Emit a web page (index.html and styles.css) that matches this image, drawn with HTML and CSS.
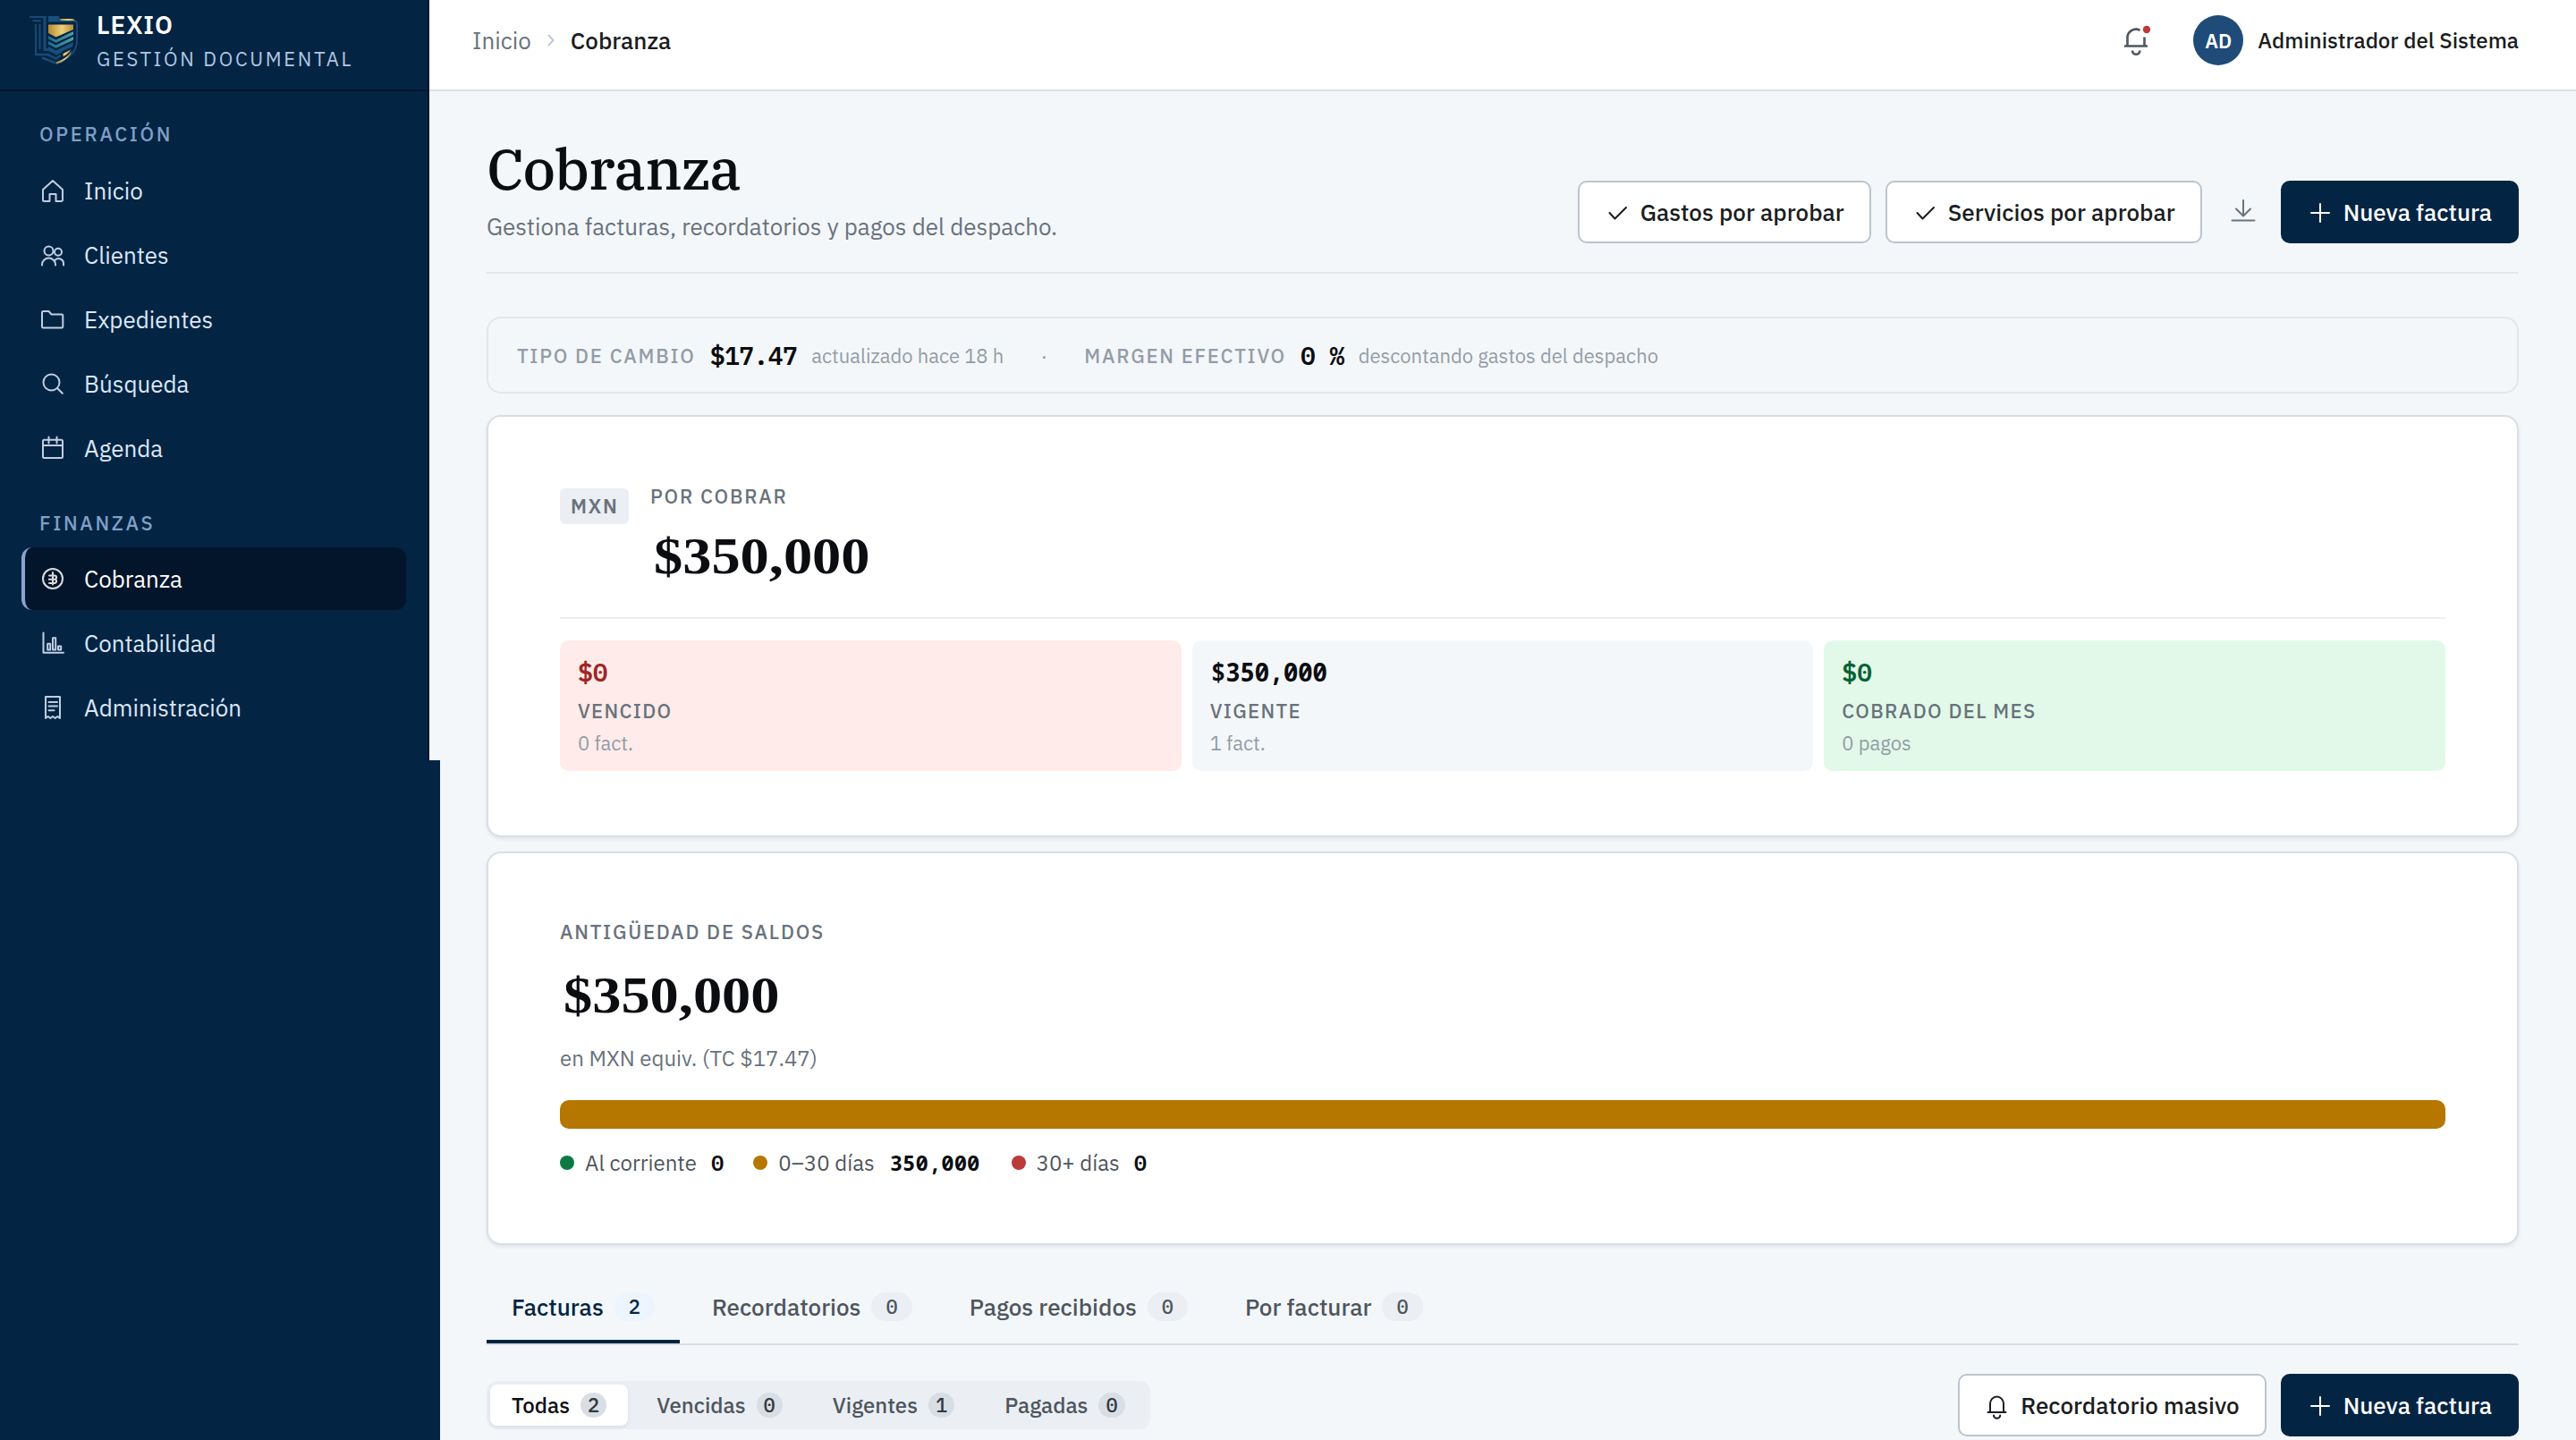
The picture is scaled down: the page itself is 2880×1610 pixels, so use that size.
FILE: index.html
```html
<!DOCTYPE html>
<html lang="es">
<head>
<meta charset="utf-8">
<title>Cobranza · LEXIO</title>
<link rel="stylesheet" href="styles.css">
</head>
<body>
<div class="app">
  <aside class="sidebar">
    <div class="sidebar-panel">
      <div class="brand">
        <svg class="brand-logo" viewBox="0 0 54 54" fill="none">
          <defs>
            <linearGradient id="gold" x1="0" x2="1" y1="0" y2="0">
              <stop offset="0" stop-color="#b58a34"/><stop offset=".55" stop-color="#ecd078"/><stop offset="1" stop-color="#b98d38"/>
            </linearGradient>
            <linearGradient id="teal" x1="0" x2="1" y1="0" y2="0">
              <stop offset="0" stop-color="#1f6a8c"/><stop offset="1" stop-color="#4aa0a8"/>
            </linearGradient>
          </defs>
          <g stroke="#174a75" stroke-width="2">
            <path d="M0 1h18.5M3.500 5.300H13M7 9v34.500M11.500 9v28"/>
            <path d="M17 0v37.500l5 0 8.500 4.200 5.500-2.400" stroke-width="3.200"/>
            <path d="M6 43h14.500l9 4.500 5.500-3.500M14 46.500l16 6.300 4-1.800" stroke-width="2.600"/>
          </g>
          <path d="M21 0h10.500l3 5.500H50q3 0 3 3V28q0 10-8.500 17-5 4-11 7.500" stroke="#174f7c" stroke-width="1.800"/>
          <path d="M21 0h10.500l3.500 6.500H21z" fill="#17517d"/>
          <path d="M34 3h14.500l2.500 2H35z" fill="url(#gold)"/>
          <path d="M21 9.500h28v5.500L29.500 23.500 21 19z" fill="url(#gold)"/>
          <path d="M21 22l8.500 4.500L49 17v3.800l-19.500 9L21 25.500z" fill="url(#teal)"/>
          <path d="M21 28l8.500 4.500L49 23v3.800l-19.500 9L21 31.500z" fill="url(#teal)"/>
          <path d="M21 34l8.500 4.500L49 29q0 3-1 5l-18.500 8.500L21 38z" fill="#17517d"/>
          <path d="M37.500 42l8.500-4.500q-2 4.500-8.500 7.500zM30 51.500q12-4 17.500-13-2.500 10-17.500 15z" fill="url(#gold)"/>
        </svg>
        <div class="brand-text">
          <span class="brand-name">LEXIO</span>
          <span class="brand-sub">GESTIÓN DOCUMENTAL</span>
        </div>
      </div>
      <nav class="nav">
        <div class="nav-label">OPERACIÓN</div>
        <a class="nav-item"><svg class="icon" viewBox="0 0 28 28"><path d="M14 3 3 13v11.500a1.500 1.500 0 0 0 1.500 1.500h6v-8h7v8h6a1.500 1.500 0 0 0 1.500-1.500V13z"/></svg>Inicio</a>
        <a class="nav-item"><svg class="icon" viewBox="0 0 28 28"><circle cx="9.500" cy="9.500" r="5"/><circle cx="20" cy="10.800" r="4"/><path d="M2 25.500v-.500a7.500 7.500 0 0 1 15 0v.500M16 20.500a5.500 5.500 0 0 1 10 3.500v1.500"/></svg>Clientes</a>
        <a class="nav-item"><svg class="icon" viewBox="0 0 28 28"><path d="M3.500 5H9.500l3 3.500H24a1.300 1.300 0 0 1 1.300 1.300v12.400A1.300 1.300 0 0 1 24 23.500H3.300A1.300 1.300 0 0 1 2 22.200V6.500A1.500 1.500 0 0 1 3.500 5z"/></svg>Expedientes</a>
        <a class="nav-item"><svg class="icon" viewBox="0 0 28 28"><circle cx="12.500" cy="12.500" r="9"/><path d="m19 19 5.800 5.800"/></svg>Búsqueda</a>
        <a class="nav-item"><svg class="icon" viewBox="0 0 28 28"><rect x="3" y="4.800" width="22" height="20.200" rx="1.500"/><path d="M3 11h22M9.500 1.500v7M18.500 1.500v7"/></svg>Agenda</a>
        <div class="nav-label nav-label-next">FINANZAS</div>
        <a class="nav-item active"><svg class="icon" viewBox="0 0 28 28"><circle cx="14" cy="14" r="11"/><path d="M14 7v13.500M10 10.500h6a2 2 0 0 1 0 4.200h-6.200M16 14.700a2 2 0 0 1 0 4.200h-6"/></svg>Cobranza</a>
        <a class="nav-item"><svg class="icon" viewBox="0 0 28 28"><path d="M3.500 2.500v22.300H26M8.200 14.800h3v6.800h-3zM14 8.200h3.200v13.400H14zM20 17.500h3.200v4.100H20z"/></svg>Contabilidad</a>
        <a class="nav-item"><svg class="icon" viewBox="0 0 28 28"><path d="M6 26V2h16v24l-2.700-2-2.600 2-2.700-2-2.700 2-2.600-2zM9.500 8h9.500M9.500 12.600h9.500M9.500 17.200h6"/></svg>Administración</a>
      </nav>
    </div>
    <div class="sidebar-rest"></div>
  </aside>

  <div class="main">
    <header class="topbar">
      <div class="crumbs">
        <span class="crumb">Inicio</span>
        <svg class="crumb-sep" viewBox="0 0 20 20"><path d="m7 4 5.500 6-5.500 6"/></svg>
        <span class="crumb-current">Cobranza</span>
      </div>
      <div class="account">
        <svg class="bell" viewBox="0 0 56 56"><path d="M15 34.500h26M18.500 34V25.500a9.500 9.500 0 0 1 14-8.700M37.500 34v-9.500M24 39.500a4.200 4.200 0 0 0 8.400 0"/><circle cx="40" cy="16" r="4.200"/></svg>
        <span class="avatar">AD</span>
        <span class="account-name">Administrador del Sistema</span>
      </div>
    </header>

    <main class="content">
      <section class="page-head">
        <div>
          <h1 class="title">Cobranza</h1>
          <p class="subtitle">Gestiona facturas, recordatorios y pagos del despacho.</p>
        </div>
        <div class="actions">
          <button class="btn"><svg class="icon" viewBox="0 0 28 28"><path d="m5.500 15 6 6.500L24 9"/></svg>Gastos por aprobar</button>
          <button class="btn"><svg class="icon" viewBox="0 0 28 28"><path d="m5.500 15 6 6.500L24 9"/></svg>Servicios por aprobar</button>
          <button class="btn-icon"><svg class="icon" viewBox="0 0 28 28"><path d="M16 1v17.500M8 10.500l8 8 8-8M3.500 23.500h25"/></svg></button>
          <button class="btn btn-primary"><svg class="icon" viewBox="0 0 28 28"><path d="M14 5v20M4 15h20"/></svg>Nueva factura</button>
        </div>
      </section>

      <section class="rates">
        <span class="rate-label">TIPO DE CAMBIO</span>
        <span class="rate-value">$17.47</span>
        <span class="rate-note">actualizado hace 18 h</span>
        <span class="rate-sep">·</span>
        <span class="rate-label">MARGEN EFECTIVO</span>
        <span class="rate-value">0 %</span>
        <span class="rate-note">descontando gastos del despacho</span>
      </section>

      <section class="card receivable">
        <div class="receivable-head">
          <span class="currency">MXN</span>
          <div>
            <div class="eyebrow eyebrow-tight">POR COBRAR</div>
            <div class="amount">$350,000</div>
          </div>
        </div>
        <div class="tiles">
          <div class="tile tile-overdue"><div class="tile-value">$0</div><div class="tile-label">VENCIDO</div><div class="tile-note">0 fact.</div></div>
          <div class="tile"><div class="tile-value long">$350,000</div><div class="tile-label">VIGENTE</div><div class="tile-note">1 fact.</div></div>
          <div class="tile tile-paid"><div class="tile-value">$0</div><div class="tile-label">COBRADO DEL MES</div><div class="tile-note">0 pagos</div></div>
        </div>
      </section>

      <section class="card aging">
        <div class="eyebrow">ANTIGÜEDAD DE SALDOS</div>
        <div class="amount aging-amount">$350,000</div>
        <div class="aging-note">en MXN equiv. (TC $17.47)</div>
        <div class="aging-bar"></div>
        <div class="legend">
          <span class="legend-item"><i class="dot green"></i>Al corriente<b>0</b></span>
          <span class="legend-item"><i class="dot amber"></i>0–30 días<b class="long">350,000</b></span>
          <span class="legend-item"><i class="dot red"></i>30+ días<b>0</b></span>
        </div>
      </section>

      <div class="tabs">
        <a class="tab active">Facturas<span class="count">2</span></a>
        <a class="tab">Recordatorios<span class="count">0</span></a>
        <a class="tab">Pagos recibidos<span class="count">0</span></a>
        <a class="tab">Por facturar<span class="count">0</span></a>
      </div>

      <div class="toolbar">
        <div class="segments">
          <a class="segment active">Todas<span class="pill">2</span></a>
          <a class="segment">Vencidas<span class="pill">0</span></a>
          <a class="segment">Vigentes<span class="pill">1</span></a>
          <a class="segment">Pagadas<span class="pill">0</span></a>
        </div>
        <div class="actions">
          <button class="btn"><svg class="icon" viewBox="0 0 28 28"><path d="M3.500 22h20M6 22v-9.500a7.500 8 0 0 1 15 0V22M10 25.500a3.600 3.200 0 0 0 7.200 0"/></svg>Recordatorio masivo</button>
          <button class="btn btn-primary"><svg class="icon" viewBox="0 0 28 28"><path d="M14 5v20M4 15h20"/></svg>Nueva factura</button>
        </div>
      </div>
    </main>
  </div>
</div>
</body>
</html>
```
FILE: styles.css
```css
* { box-sizing: border-box; }

:root {
  --navy: #042443;
  --navy-deep: #03152a;
  --bg: #f3f7fa;
  --ink: #0b0d11;
  --mono: "IBM Plex Mono", "Liberation Mono", monospace;
}

body {
  margin: 0;
  background: var(--bg);
  color: var(--ink);
  font-family: "IBM Plex Sans", Roboto, sans-serif;
  font-size: 26px;
}

h1, p { margin: 0; }
button { font: inherit; }

.app {
  display: grid;
  grid-template-columns: 480px 1fr;
  height: 1610px;
  overflow: hidden;
}

.icon {
  width: 28px;
  height: 28px;
  flex: none;
  overflow: visible;
  fill: none;
  stroke: currentColor;
  stroke-width: 2;
  stroke-linecap: round;
  stroke-linejoin: round;
}

/* Sidebar */
.sidebar { display: flex; flex-direction: column; z-index: 1; }
.sidebar-panel {
  height: 850px;
  flex: none;
  background: var(--navy);
  border-right: 2px solid var(--navy-deep);
}
.sidebar-rest { flex: 1; width: 492px; background: var(--navy); }

.brand {
  display: flex;
  height: 102px;
  padding: 10px 0 0 33px;
  gap: 21px;
  border-bottom: 2px solid var(--navy-deep);
}
.brand-logo { width: 54px; height: 54px; margin-top: 8px; }
.brand-text { display: flex; flex-direction: column; gap: 2px; line-height: 36px; }
.brand-name { font-size: 28px; font-weight: 600; letter-spacing: 0.87px; color: #fff; }
.brand-sub { font-size: 22px; letter-spacing: 0.12em; color: #b3c7e2; }

.nav { display: flex; flex-direction: column; gap: 2px; padding: 33px 24px 0; }
.nav-label {
  margin-bottom: 11px;
  padding-left: 20px;
  font-size: 22px;
  font-weight: 500;
  line-height: 30px;
  letter-spacing: 0.12em;
  color: #7f9fc6;
}
.nav-label-next { margin: 32px 0 10px; }
.nav-item {
  display: flex;
  align-items: center;
  gap: 21px;
  height: 70px;
  padding-left: 17px;
  border-left: 4px solid transparent;
  border-radius: 12px;
  color: #dbe7f8;
}
.nav-item .icon { color: #c0cee2; }
.nav-item.active { background: var(--navy-deep); border-left-color: #86a6cf; color: #fff; }
.nav-item.active .icon { color: #dcdcdc; }

/* Top bar */
.topbar {
  display: flex;
  justify-content: space-between;
  height: 102px;
  padding: 0 64px 10px 48px;
  background: #fff;
  border-bottom: 2px solid #d9dee6;
}
.crumbs, .account { display: flex; align-items: center; }
.crumbs { gap: 12px; }
.crumb { color: #69727c; }
.crumb-sep { width: 20px; height: 20px; fill: none; stroke: #c0c8d2; stroke-width: 2; }
.crumb-current { font-weight: 500; color: #1a1d21; }
.bell { width: 56px; height: 56px; margin-right: 36px; fill: none; stroke: #4f565e; stroke-width: 2.600; }
.bell circle { fill: #bb3a3a; stroke: none; }
.avatar {
  display: grid;
  place-items: center;
  width: 56px;
  height: 56px;
  margin-right: 16px;
  border-radius: 50%;
  background: #1f4b78;
  color: #fff;
  font-size: 22px;
  font-weight: 600;
}
.account-name { font-size: 24px; font-weight: 500; color: #1a1d21; }

/* Page header */
.content { padding: 47px 64px 0; }
.page-head {
  display: flex;
  justify-content: space-between;
  align-items: flex-end;
  height: 157px;
  padding-bottom: 32px;
  border-bottom: 2px solid #e2e7ea;
}
.title {
  margin-bottom: 7px;
  font-family: "IBM Plex Serif", "DejaVu Serif Condensed", serif;
  font-size: 64px;
  font-weight: 500;
  line-height: 76px;
  letter-spacing: -0.015em;
}
.subtitle { margin-bottom: -1px; line-height: 40px; color: #69727c; }

.actions { display: flex; gap: 16px; }
.btn {
  display: flex;
  align-items: center;
  gap: 12px;
  height: 70px;
  padding: 0 28px;
  border: 2px solid #bcc4ce;
  border-radius: 10px;
  background: #fff;
  color: #1a1d21;
  font-weight: 500;
  white-space: nowrap;
}
.btn-primary { border-color: var(--navy); background: var(--navy); color: #fff; }
.btn-icon {
  display: grid;
  place-items: center;
  width: 56px;
  padding: 0;
  border: 0;
  background: none;
  color: #69737d;
}

/* Exchange-rate strip */
.rates {
  display: flex;
  align-items: center;
  gap: 16px;
  height: 86px;
  margin: 48px 0 24px;
  padding: 0 32px;
  border: 2px solid #e2e7ea;
  border-radius: 16px;
  font-size: 22px;
  color: #939ca6;
}
.rate-label { font-weight: 500; letter-spacing: 0.08em; }
.rate-value {
  font-family: var(--mono);
  font-size: 28px;
  font-weight: 600;
  letter-spacing: -0.02em;
  color: var(--ink);
}
.rate-sep { width: 58px; text-align: center; }

/* Cards */
.card {
  padding: 80px 80px 72px;
  border: 2px solid #d9dee5;
  border-radius: 16px;
  background: #fff;
  box-shadow: 0 2px 4px rgba(10, 30, 60, 0.08);
}
.eyebrow {
  font-size: 22px;
  font-weight: 500;
  line-height: 30px;
  letter-spacing: 0.08em;
  color: #69727c;
}
.eyebrow-tight { line-height: 18px; }
.amount {
  width: max-content;
  margin-left: 4px;
  font-family: "Liberation Serif", serif;
  font-size: 56px;
  font-weight: 700;
  line-height: 68px;
  transform: scaleX(1.15);
  transform-origin: left;
}

.receivable { height: 472px; }
.receivable-head {
  display: flex;
  align-items: flex-start;
  gap: 24px;
  height: 146px;
  border-bottom: 2px solid #ebeff4;
}
.receivable-head .amount { margin-top: 24px; }
.currency {
  width: 77px;
  padding-left: 12px;
  border-radius: 6px;
  background: #ebeff4;
  color: #69727c;
  font-size: 22px;
  font-weight: 600;
  line-height: 40px;
  letter-spacing: 0.08em;
}

.tiles { display: grid; grid-template-columns: repeat(3, 1fr); gap: 12px; margin-top: 24px; }
.tile {
  height: 146px;
  padding: 18px 20px 0;
  border-radius: 10px;
  background: var(--bg);
}
.tile-value { font-family: var(--mono); font-size: 28px; font-weight: 600; line-height: 36px; }
.tile-value.long { padding-left: 1px; line-height: 34px; margin-bottom: 12px; }
.long { font-family: "Noto Sans Mono", "DejaVu Sans Mono", monospace; font-weight: 700; letter-spacing: -0.02em; }
.tile-label {
  margin: 10px 0 6px;
  font-size: 22px;
  font-weight: 500;
  line-height: 30px;
  letter-spacing: 0.06em;
  color: #69727c;
}
.tile-note { font-size: 22px; line-height: 30px; color: #939ca6; }
.tile-overdue { background: #ffebe9; }
.tile-overdue .tile-value { color: #9c2626; }
.tile-paid { background: #e2f9e9; }
.tile-paid .tile-value { color: #066136; }

.aging { height: 440px; margin-top: 16px; padding-top: 73px; }
.aging-amount { margin-top: 22px; }
.aging-note { margin: 18px 0 29px; font-size: 24px; line-height: 36px; color: #69727c; }
.aging-bar { height: 32px; border-radius: 10px; background: #b57700; }
.legend { display: flex; gap: 33px; margin-top: 20px; font-size: 24px; line-height: 36px; color: #4f565e; }
.legend-item { display: flex; align-items: center; }
.legend b { margin-left: 16px; font-family: var(--mono); font-weight: 600; color: var(--ink); }
.legend b.long { padding: 0 2px 0 1px; font-family: "Noto Sans Mono", "DejaVu Sans Mono", monospace; font-weight: 700; letter-spacing: 0; }
.dot { width: 16px; height: 16px; margin-right: 12px; border-radius: 50%; }
.green { background: #0d7a43; }
.amber { background: #b57700; }
.red { background: #bb3a3a; }

/* Tabs */
.tabs { display: flex; gap: 8px; margin-top: 32px; border-bottom: 2px solid #d9dee5; }
.tab {
  display: flex;
  align-items: center;
  gap: 12px;
  height: 78px;
  padding: 0 28px;
  border-bottom: 4px solid transparent;
  font-weight: 500;
  color: #4f565e;
}
.tab.active { border-color: var(--navy); color: var(--navy); }
.count {
  padding: 0 16px;
  border-radius: 16px;
  background: #ebeff4;
  font-family: var(--mono);
  font-size: 22px;
  line-height: 32px;
}
.tab.active .count { background: #ecf4fe; }

/* Toolbar */
.toolbar { display: flex; justify-content: space-between; align-items: center; margin-top: 32px; }
.segments { display: flex; gap: 8px; height: 54px; padding: 4px; border-radius: 12px; background: #ebeff4; }
.segment {
  display: flex;
  align-items: center;
  gap: 12px;
  padding: 0 24px;
  border-radius: 8px;
  font-size: 24px;
  font-weight: 500;
  color: #4f565e;
}
.segment.active { background: #fff; color: var(--ink); box-shadow: 0 2px 4px rgba(10, 30, 60, 0.08); }
.pill {
  padding: 0 8px;
  border-radius: 14px;
  background: #d9dee5;
  color: #33383e;
  font-family: var(--mono);
  font-size: 22px;
  line-height: 28px;
}
```
